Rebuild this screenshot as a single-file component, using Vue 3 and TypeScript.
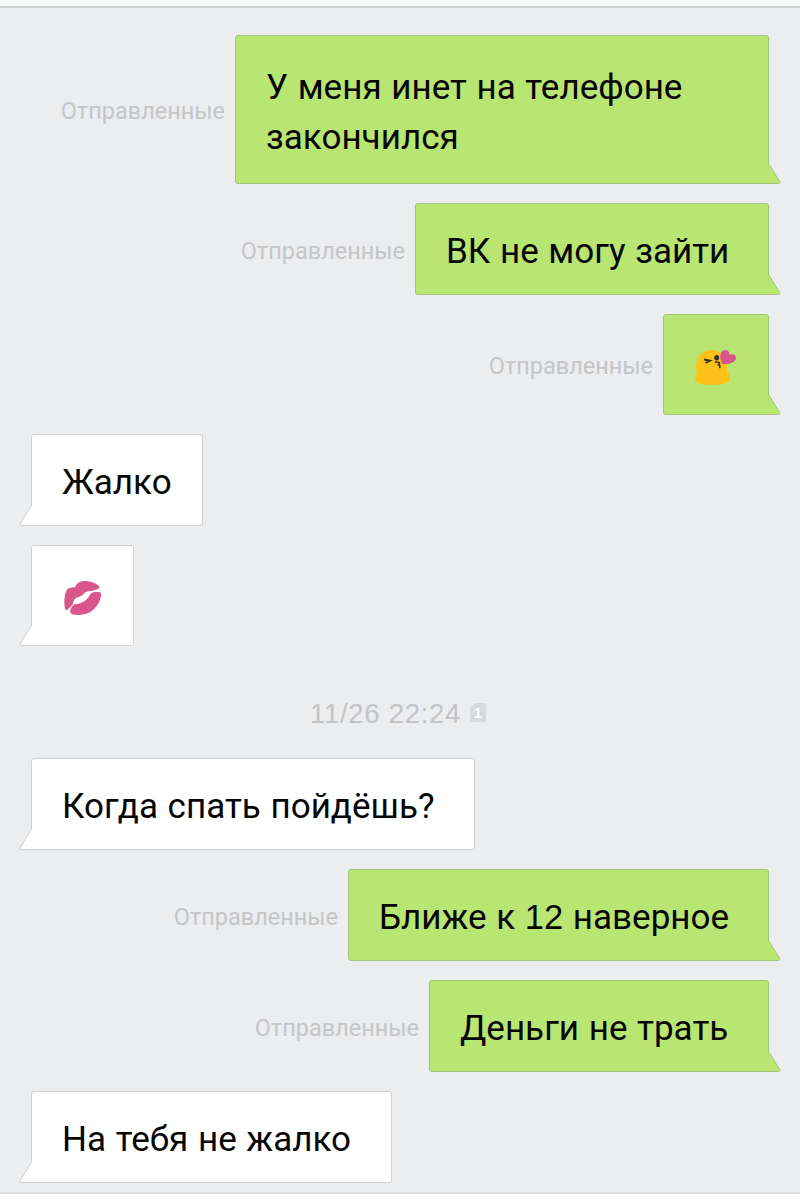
<script setup lang="ts">
type Item = {
  kind: 'out' | 'in' | 'time'
  text?: string
  icon?: 'blowkiss' | 'lips'
  width?: number
  size?: 'tall' | 'small'
}

const items: Item[] = [
  { kind: 'out', text: 'У меня инет на телефоне\nзакончился', width: 534, size: 'tall' },
  { kind: 'out', text: 'ВК не могу зайти', width: 354 },
  { kind: 'out', icon: 'blowkiss', width: 106, size: 'small' },
  { kind: 'in', text: 'Жалко', width: 172 },
  { kind: 'in', icon: 'lips', width: 103, size: 'small' },
  { kind: 'time', text: '11/26 22:24' },
  { kind: 'in', text: 'Когда спать пойдёшь?', width: 444 },
  { kind: 'out', text: 'Ближе к 12 наверное', width: 421 },
  { kind: 'out', text: 'Деньги не трать', width: 340 },
  { kind: 'in', text: 'На тебя не жалко', width: 361 },
]

// Digits are set in a different face from the letters around them.
const runs = (text: string): string[] => text.split(/(\d+)/).filter(Boolean)
const isDigits = (run: string): boolean => /^\d+$/.test(run)
</script>

<template>
  <main class="screen">
    <header class="top-edge"></header>
    <section class="thread">
      <template v-for="(m, i) in items" :key="i">
        <div v-if="m.kind === 'time'" class="time">
          <span>{{ m.text }}</span>
          <span class="sim">
            <svg viewBox="0 0 16 19" width="16" height="19">
              <path d="M5 0H14.500Q16 0 16 1.500V17.500Q16 19 14.500 19H1.500Q0 19 0 17.500V5Z" fill="#d9dadc" />
            </svg>
            <b>1</b>
          </span>
        </div>
        <div v-else class="row" :class="m.kind">
          <span v-if="m.kind === 'out'" class="status">Отправленные</span>
          <div class="bubble" :class="m.size" :style="{ width: m.width + 'px' }">
            <p v-if="m.text"><span v-for="(r, k) in runs(m.text)" :key="k" :class="{ digits: isDigits(r) }">{{ r }}</span></p>
            <svg v-if="m.icon === 'blowkiss'" class="emoji" width="43" height="37" viewBox="0 0 43 37">
              <path d="M1.500 33.500V30Q1 26.500 3 24Q1.800 21 2 17C2.500 7 9 1 18 1S33 8 33 18V22Q36 24.500 35.500 28Q36.500 31 35 33Q29 36 18.500 36Q8 36 1.500 33.500Z" fill="#fcc21b" />
              <path d="M10 10.500L16 11.600L11.500 14" fill="none" stroke="#35322c" stroke-width="1.900" />
              <ellipse cx="22.700" cy="8.700" rx="2.500" ry="2.700" fill="#35322c" />
              <path d="M21 13L25 13.500Q26.300 14.500 24.500 15.800Q27 16.800 25.300 19" fill="none" stroke="#35322c" stroke-width="1.600" />
              <path d="M28.500 14.800C25 9.500 25.500 1 31 1Q35 1.200 35.700 5.500Q42 4.500 42 9.200C41.500 13.500 34 15.800 28.500 14.800Z" fill="#d9568c" />
            </svg>
            <svg v-if="m.icon === 'lips'" class="emoji" width="39" height="36" viewBox="0 0 39 36">
              <path d="M2.700 29.800C.6 27 .8 13 4.500 9Q7 7 12 7.300Q14.500 1 21 1C27 .8 33.500 3.500 36 6Q38 7.500 34 9.200C31 10.500 29 11 25 11.300Q21.500 11.700 19.500 15L16.500 16.700Q11 18 10.500 21.500Q10.500 25 4.500 29.500Q3.500 30.500 2.700 29.800Z" fill="#d9568c" />
              <path d="M11 24.200C19 24 24 20.500 27 14.500Q28.500 12 31.500 12L36.500 12Q38.500 12.500 38 16C36 26 29 33.500 18.500 34.800Q7.500 35.500 7.200 32Q7 28 11 24.200Z" fill="#d9568c" />
            </svg>
            <svg class="tail" width="14" height="21" viewBox="0 0 14 21">
              <path class="fill" d="M0 0H1.500V.5L12.700 18.500Q13.300 20.500 11.500 20.500H0Z" />
              <path class="line" d="M1.500 0V.5L12.700 18.500Q13.300 20.500 11.500 20.500H0" />
            </svg>
          </div>
        </div>
      </template>
    </section>
    <footer class="bottom-edge"></footer>
  </main>
</template>

<style>
body {
  margin: 0;
}
</style>

<style scoped>
.screen {
  width: 800px;
  height: 1200px;
  display: flex;
  flex-direction: column;
  overflow: hidden;
  background: #ecedef;
  font-family: Roboto, 'Open Sans', sans-serif;
}
.top-edge {
  height: 6px;
  flex: none;
  background: #f6f7f7;
  border-bottom: 2px solid #cdd0cf;
}
.thread {
  flex: 1;
  display: flex;
  flex-direction: column;
  gap: 19px;
  padding: 27px 31px 0;
}
.row {
  display: flex;
  align-items: center;
  gap: 10px;
}
.out {
  justify-content: flex-end;
}
.status {
  padding-top: 3px;
  color: #c5c6c8;
  font-size: 23.5px;
  line-height: 28px;
}
.bubble {
  position: relative;
  box-sizing: border-box;
  flex: none;
  height: 92px;
  padding: 23px 0 0 30px;
  background: #fff;
  border: 1px solid #d0d1d4;
  border-radius: 3px 3px 3px 0;
}
.out .bubble {
  background: #b9e573;
  border-color: #a0c579;
  border-radius: 3px 3px 0 3px;
}
.bubble.tall {
  height: 149px;
  padding-top: 27px;
}
.bubble.small {
  height: 101px;
  padding-top: 20px;
}
.bubble p {
  margin: 0;
  color: #050604;
  font-size: 35px;
  line-height: 50px;
  letter-spacing: 0.02px;
  word-spacing: 0.9px;
  white-space: pre;
}
.bubble .digits {
  font-family: 'Liberation Sans', Arial, sans-serif;
  font-size: 34.5px;
  line-height: 1;
}
.emoji {
  display: block;
  margin: 14px 0 0 0;
}
.in .emoji {
  margin: 14px 0 0 1px;
}
.tail {
  position: absolute;
  bottom: -1px;
  left: -13px;
  transform: scaleX(-1);
}
.out .tail {
  left: auto;
  right: -13px;
  transform: none;
}
.tail .fill {
  fill: #fff;
}
.tail .line {
  fill: none;
  stroke: #d0d1d4;
}
.out .tail .fill {
  fill: #b9e573;
}
.out .tail .line {
  stroke: #a0c579;
}
.time {
  height: 74px;
  box-sizing: border-box;
  padding: 32px 4px 0 0;
  display: flex;
  justify-content: center;
  gap: 9px;
  color: #c3c4c6;
  font: 27.5px/34px 'Liberation Sans', Arial, sans-serif;
  letter-spacing: 0.7px;
}
.sim {
  position: relative;
  width: 16px;
  height: 19px;
  margin-top: 6px;
}
.sim svg {
  display: block;
}
.sim b {
  position: absolute;
  inset: 0;
  color: #fff;
  font: bold 14px/20px 'Liberation Sans', Arial, sans-serif;
  letter-spacing: 0;
  text-align: center;
}
.bottom-edge {
  height: 6px;
  flex: none;
  background: #fcfcfc;
  border-top: 2px solid #dcdddd;
}
</style>
